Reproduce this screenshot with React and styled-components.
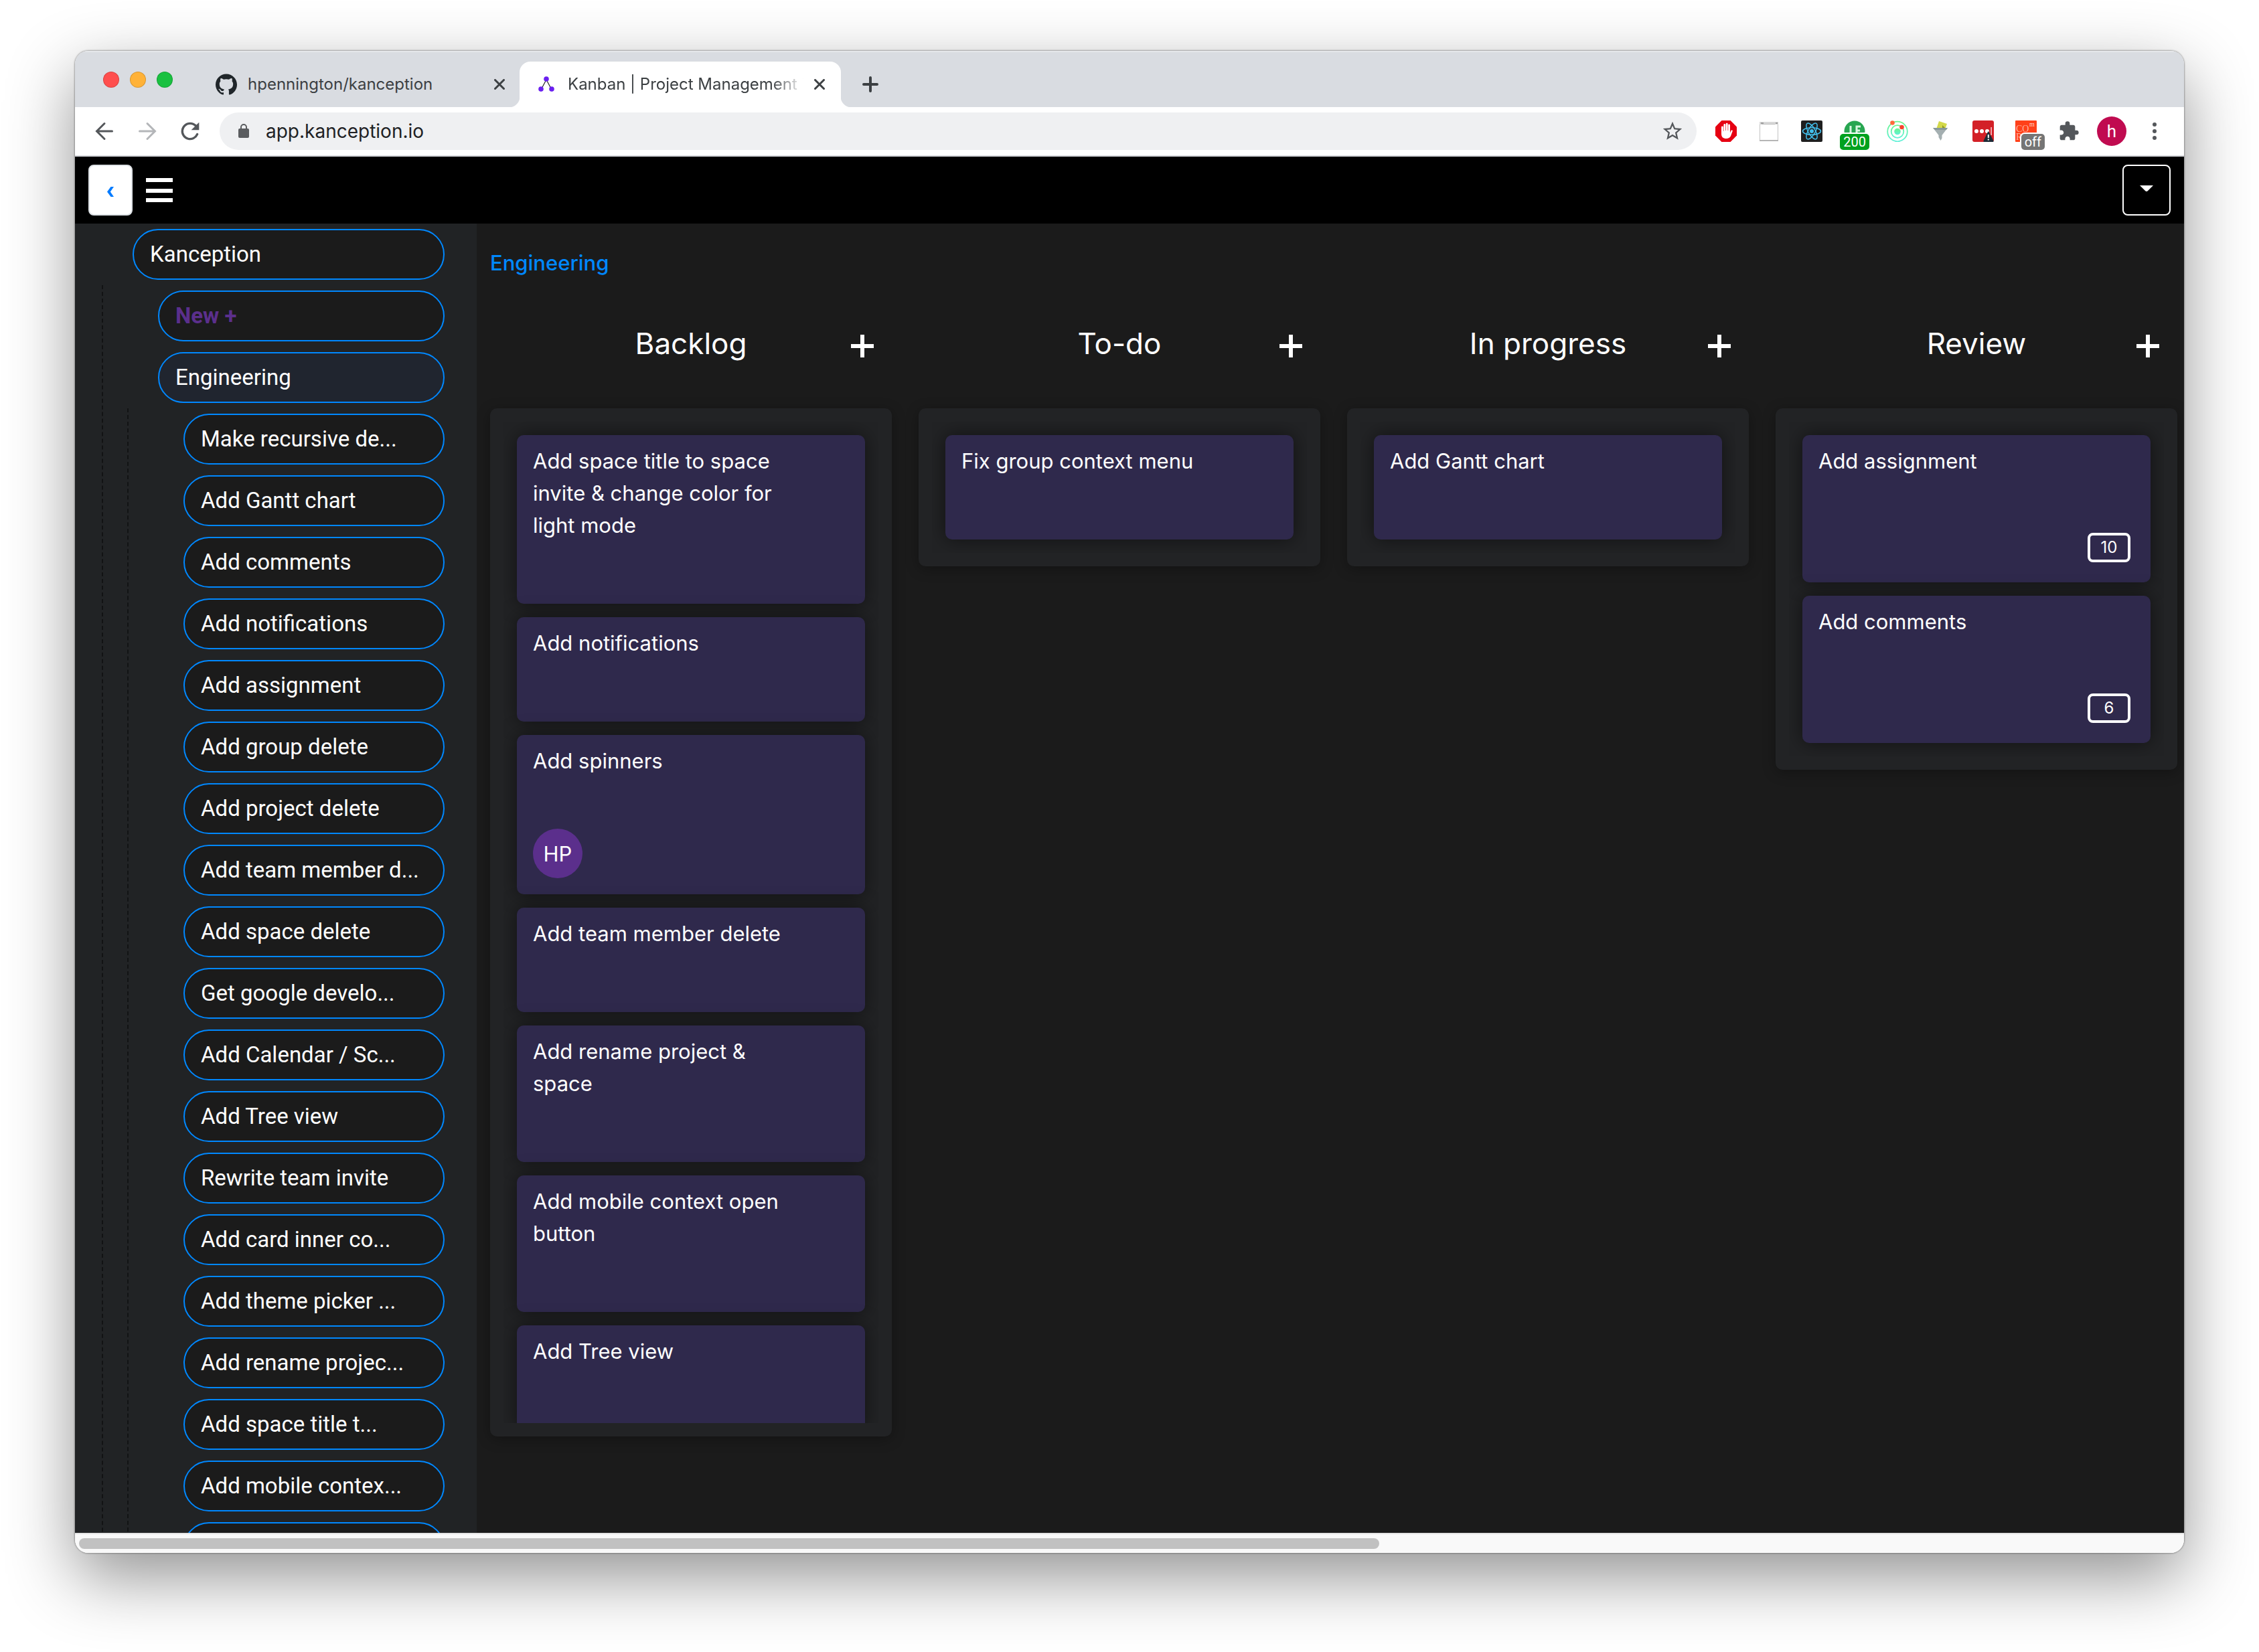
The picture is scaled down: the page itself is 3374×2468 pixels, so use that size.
import React from "react";
import styled, { createGlobalStyle } from "styled-components";
import { MdStarBorder, MdExtension } from "react-icons/md";
import { SiGithub } from "react-icons/si";

const GlobalStyle = createGlobalStyle`
  *, *::before, *::after { box-sizing: border-box; }
  body {
    margin: 0;
    background: #fff;
    font-family: Inter, "Liberation Sans", sans-serif;
  }
  button, input { font: inherit; color: inherit; }
  button { padding: 0; border: 0; background: none; cursor: pointer; }
  svg { display: block; flex: none; }
`;

const Desktop = styled.div`
  height: 100vh;
  padding: 76px 112px 148px;
  overflow: hidden;
`;

const Window = styled.div`
  display: flex;
  flex-direction: column;
  height: 100%;
  overflow: hidden;
  border-radius: 20px;
  background: #f9f9f9;
  box-shadow: 0 0 2px 1px rgba(0, 0, 0, 0.3), 0 36px 100px rgba(0, 0, 0, 0.43);
`;

/* Browser chrome */

const TabStrip = styled.div`
  display: flex;
  align-items: flex-end;
  height: 84px;
  flex: none;
  background: #d9dce1;
  box-shadow: inset 0 2px 0 #e6e8eb;
`;

const TrafficLights = styled.div`
  display: flex;
  align-self: center;
  gap: 16px;
  padding: 2px 30px 0 42px;
`;

const Light = styled.button`
  width: 24px;
  height: 24px;
  border: 1px solid rgba(0, 0, 0, 0.15);
  border-radius: 50%;
  background: ${(p) => p.$color};
`;

const Tab = styled.div`
  position: relative;
  display: flex;
  align-items: center;
  width: ${(p) => (p.$active ? 480 : 488)}px;
  height: 68px;
  padding: ${(p) => (p.$active ? "0 16px 0 28px" : "0 14px 0 34px")};
  border-radius: 16px 16px 0 0;
  background: ${(p) => (p.$active ? "#fff" : "transparent")};
  color: #3c4043;

  &::before,
  &::after {
    content: "";
    display: ${(p) => (p.$active ? "block" : "none")};
    position: absolute;
    bottom: 0;
    width: 16px;
    height: 16px;
  }
  &::before {
    right: 100%;
    background: radial-gradient(circle at 0 0, transparent 16px, #fff 17px);
  }
  &::after {
    left: 100%;
    background: radial-gradient(circle at 100% 0, transparent 16px, #fff 17px);
  }
`;

const TabTitle = styled.button`
  flex: 1;
  min-width: 0;
  margin: 0 8px 0 ${(p) => (p.$fade ? 20 : 16)}px;
  overflow: hidden;
  white-space: nowrap;
  text-align: left;
  font-size: 24px;
  line-height: 32px;
  ${(p) =>
    p.$fade &&
    "mask-image: linear-gradient(90deg, #000 calc(100% - 48px), transparent);"}
`;

const IconButton = styled.button`
  display: flex;
  align-items: center;
  justify-content: center;
  flex: none;
  width: ${(p) => p.$size || 32}px;
  height: ${(p) => p.$size || 32}px;
  color: ${(p) => p.$color || "#54575b"};
`;

const NewTab = styled(IconButton)`
  align-self: flex-end;
  width: 56px;
  height: 68px;
  margin-left: 16px;
`;

const Toolbar = styled.div`
  display: flex;
  align-items: center;
  height: 74px;
  flex: none;
  padding: 0 28px 0 24px;
  border-bottom: 2px solid #d5d7db;
  background: #fff;
`;

const NavButtons = styled.div`
  display: flex;
  gap: 24px;
  padding-right: 24px;
`;

const Omnibox = styled.label`
  display: flex;
  align-items: center;
  flex: 1;
  height: 56px;
  padding: 0 20px 0 28px;
  gap: 25px;
  border-radius: 28px;
  background: #eff0f2;
`;

const Address = styled.input`
  flex: 1;
  min-width: 0;
  padding: 0;
  border: 0;
  outline: 0;
  background: none;
  color: #202124;
  font-size: 28px;
  line-height: 40px;
`;

const Extensions = styled.div`
  display: flex;
  align-items: center;
  gap: 32px;
  padding-left: 28px;
`;

const Extension = styled(IconButton)`
  position: relative;
`;

const Badge = styled.span`
  position: absolute;
  top: 20px;
  right: -${(p) => p.$overhang}px;
  padding: 0 5px;
  border-radius: 5px;
  background: ${(p) => p.$color};
  box-shadow: 0 0 0 2px #fff;
  color: #fff;
  font-family: Roboto, sans-serif;
  font-size: 20px;
  line-height: 24px;
`;

const Profile = styled(IconButton)`
  margin: 0 -6px;
  border-radius: 50%;
  background: #c00b50;
  color: #fff;
  font-size: 26px;
  font-family: Roboto, sans-serif;
`;

/* Application */

const AppHeader = styled.header`
  display: flex;
  align-items: center;
  height: 100px;
  flex: none;
  gap: 20px;
  padding: 0 20px;
  background: #000;
`;

const BackButton = styled.button`
  display: flex;
  align-items: center;
  justify-content: center;
  width: 66px;
  height: 76px;
  padding-top: 4px;
  border: 2px solid #dee2e6;
  border-radius: 8px;
  background: #fff;
  color: #007bff;
`;

const AccountButton = styled(BackButton)`
  width: 72px;
  margin-left: auto;
  padding: 0 0 4px;
  border-color: #fff;
  background: #000;
  color: #fff;
`;

const Body = styled.div`
  display: flex;
  flex: 1;
  min-height: 0;
`;

const Sidebar = styled.nav`
  width: 600px;
  flex: none;
  padding: 0 48px 0 4px;
  overflow: hidden;
  background: #212325;
`;

const Branch = styled.div`
  margin-left: 36px;
  border-left: 2px dashed #121314;
`;

const Leaf = styled.div`
  padding: 8px 0 8px 82px;
`;

const Pill = styled.button`
  display: block;
  width: 100%;
  height: 76px;
  padding: 0 24px 2px;
  overflow: hidden;
  border: 2px solid #0088ff;
  border-radius: 38px;
  background: ${(p) => (p.$selected ? "#20252f" : "#1b1b1b")};
  color: ${(p) => (p.$accent ? "#5b2f8c" : "#fff")};
  font-family: Roboto, sans-serif;
  font-size: 33px;
  font-weight: ${(p) => (p.$accent ? 700 : 400)};
  text-align: left;
  white-space: nowrap;
`;

const Board = styled.main`
  display: flex;
  flex-direction: column;
  flex: 1;
  min-width: 0;
  padding: 35px 0 144px 20px;
  overflow: hidden;
  background: #1b1b1b;
`;

const Breadcrumb = styled.a`
  align-self: flex-start;
  color: #0088ff;
  font-size: 31px;
  font-weight: 500;
  line-height: 48px;
  text-decoration: none;
`;

const Columns = styled.div`
  display: flex;
  align-items: flex-start;
  flex: 1;
  min-height: 0;
  gap: 40px;
`;

const Column = styled.section`
  display: flex;
  flex-direction: column;
  width: 600px;
  max-height: 100%;
  flex: none;
`;

const ColumnHead = styled.header`
  display: grid;
  grid-template-columns: 1fr auto 1fr;
  align-items: center;
  padding: 50px 24px 51px;
`;

const ColumnTitle = styled.h2`
  grid-column: 2;
  margin: 0;
  color: #fff;
  font-size: 44px;
  font-weight: 400;
  line-height: 92px;
`;

const AddCard = styled(IconButton)`
  justify-self: end;
  height: 48px;
  padding-top: 8px;
`;

const Lane = styled.div`
  display: flex;
  flex-direction: column;
  min-height: 0;
  padding: 20px;
  border-radius: 10px;
  background: #222325;
  box-shadow: 0 4px 20px rgba(0, 0, 0, 0.3);
`;

const CardList = styled.div`
  display: flex;
  flex-direction: column;
  min-height: 0;
  gap: 20px;
  padding: 20px;
  overflow: hidden;
`;

const Card = styled.article`
  display: flex;
  flex-direction: column;
  flex: none;
  min-height: 156px;
  padding: 15px 30px ${(p) => (p.$footer ? 24 : 93)}px 24px;
  border-radius: 10px;
  background: #2f294c;
  box-shadow: 0 0 28px rgba(0, 0, 0, 0.5);
  color: #fff;
`;

const CardTitle = styled.p`
  width: 380px;
  margin: 0;
  font-size: 31px;
  line-height: 48px;
`;

const Assignee = styled.span`
  display: flex;
  align-items: center;
  justify-content: center;
  width: 74px;
  height: 74px;
  margin-top: 77px;
  border-radius: 50%;
  background: #5b2f8c;
  font-size: 31px;
`;

const Comments = styled.span`
  align-self: flex-end;
  width: 64px;
  margin: 83px 0 6px;
  border: 4px solid #fff;
  border-radius: 8px;
  font-size: 24px;
  line-height: 36px;
  text-align: center;
`;

const ScrollTrack = styled.div`
  height: 30px;
  flex: none;
  padding: 6px;
  border-top: 2px solid #e4e4e4;
  background: #f9f9f9;
`;

const ScrollThumb = styled.div`
  width: 61.9%;
  height: 16px;
  border-radius: 8px;
  background: #c1c1c1;
`;

/* Icons */

const Cross = () => (
  <svg width="16" height="16" viewBox="0 0 16 16" fill="none" stroke="#3c4043" strokeWidth="3" strokeLinecap="round">
    <path d="M1.5 1.5l13 13M14.5 1.5l-13 13" />
  </svg>
);

const Plus = ({ size, stroke, color, cap }) => (
  <svg width={size} height={size} viewBox={`0 0 ${size} ${size}`} fill="none" stroke={color} strokeWidth={stroke} strokeLinecap={cap}>
    <path
      d={
        cap === "round"
          ? `M${stroke / 2} ${size / 2}H${size - stroke / 2}M${size / 2} ${stroke / 2}V${size - stroke / 2}`
          : `M0 ${size / 2}H${size}M${size / 2} 0V${size}`
      }
    />
  </svg>
);

const TreeLogo = () => (
  <svg width="24" height="28" viewBox="0 0 24 28">
    <path d="M12 7L4 22M12 7l8 15" stroke="#222" strokeWidth="1.2" />
    <g fill="#6a1ff0">
      <circle cx="12" cy="6" r="3.8" />
      <circle cx="4" cy="21" r="3.8" />
      <circle cx="20" cy="21" r="3.8" />
    </g>
  </svg>
);

const Arrow = ({ flip }) => (
  <svg width="28" height="28" viewBox="0 0 28 28" fill="none" stroke={flip ? "#b4b6b9" : "#54575b"} strokeWidth="3" strokeLinecap="round">
    <path d={flip ? "M2.5 14H25M14 2.5L25.5 14 14 25.5" : "M25.5 14H3M14 2.5L2.5 14 14 25.5"} />
  </svg>
);

const Reload = () => (
  <svg width="40" height="40" viewBox="0 0 24 24" fill="#54575b">
    <path d="M17.65 6.35A7.95 7.95 0 0 0 12 4a8 8 0 1 0 7.3 11.2 1 1 0 0 0-1.8-.9A6 6 0 1 1 12 6c1.66 0 3.14.69 4.22 1.78L13 11h7V4l-2.35 2.35z" />
  </svg>
);

const Lock = () => (
  <svg width="16" height="22" viewBox="0 0 16 22">
    <rect y="7" width="16" height="14" rx="2" fill="#5a5c5f" />
    <path d="M4 8V5a4 4 0 0 1 8 0v3" fill="none" stroke="#5a5c5f" strokeWidth="2" />
  </svg>
);

const Kebab = () => (
  <svg width="8" height="28" viewBox="0 0 8 28" fill="#54575b">
    <circle cx="4" cy="4" r="3" />
    <circle cx="4" cy="14" r="3" />
    <circle cx="4" cy="24" r="3" />
  </svg>
);

const StopHand = () => (
  <svg width="32" height="32" viewBox="0 0 32 32">
    <path d="M9.4 0h13.2L32 9.4v13.2L22.6 32H9.4L0 22.6V9.4z" fill="#e60012" />
    <path
      d="M9 10a1.4 1.4 0 0 1 2.8 0v6h.6V6.5a1.4 1.4 0 0 1 2.8 0V15h.6V5.2a1.4 1.4 0 0 1 2.8 0V15h.6V6.8a1.4 1.4 0 0 1 2.8 0V18.5l1-2.5c.5-1.2 1.4-1.7 2.5-1.2.5.3.3.9.1 1.5l-2.6 7C21.5 26 19.5 27 16.5 27 11.5 27 9 24.5 9 20z"
      fill="#fff"
    />
  </svg>
);

const BlankPage = () => (
  <svg width="32" height="32" viewBox="0 0 32 32">
    <rect x="2.5" y="3" width="27" height="27" fill="#fff" stroke="#c4c4c4" />
    <rect x="2" y="2" width="28" height="4" fill="#d8d8d8" />
    <path d="M4 4h4M26 4h3" stroke="#8d8d8d" strokeWidth="1.5" />
    <path d="M5 5.5h20" stroke="#bbb" />
    <path d="M2 30h28" stroke="#b5b5b5" strokeWidth="2" />
  </svg>
);

const Atom = () => (
  <svg width="32" height="32" viewBox="0 0 32 32">
    <rect width="32" height="32" rx="2" fill="#1f1f1f" />
    <g fill="none" stroke="#42bfec" strokeWidth="1.5">
      <ellipse cx="16" cy="16" rx="13.5" ry="5.2" />
      <ellipse cx="16" cy="16" rx="13.5" ry="5.2" transform="rotate(60 16 16)" />
      <ellipse cx="16" cy="16" rx="13.5" ry="5.2" transform="rotate(120 16 16)" />
    </g>
    <circle cx="16" cy="16" r="3" fill="#42bfec" />
  </svg>
);

const GreenDisc = () => (
  <svg width="32" height="32" viewBox="0 0 32 32">
    <circle cx="16" cy="16" r="15.5" fill="#28a651" />
    <path d="M10 8v12h5M25 9h-6v11M19 15h5" fill="none" stroke="#d8f5e0" strokeWidth="3" />
  </svg>
);

const Orbit = () => (
  <svg width="32" height="32" viewBox="0 0 32 32">
    <defs>
      <linearGradient id="orbit" x1="0" y1="0" x2="0" y2="1">
        <stop offset="0" stopColor="#6df58c" />
        <stop offset="1" stopColor="#5ff0d8" />
      </linearGradient>
    </defs>
    <g fill="none" stroke="url(#orbit)" strokeWidth="1.8">
      <circle cx="16" cy="16.5" r="14.8" />
      <circle cx="16" cy="16.5" r="9.3" />
    </g>
    <circle cx="16" cy="16.5" r="4.8" fill="url(#orbit)" />
    <circle cx="8.5" cy="3.5" r="3.3" fill="#ff6a3a" />
    <circle cx="22.5" cy="10" r="3.3" fill="#f8432f" />
  </svg>
);

const Funnel = () => (
  <svg width="32" height="32" viewBox="0 0 32 32">
    <path d="M14 1l12 4-4 11H9z" fill="#d3d94a" />
    <path d="M19 7l4 4-4 2z" fill="#8e9626" />
    <path d="M5 11h22l-8.5 11v4.5L16.5 30l-3-5v-3z" fill="#a4afb1" />
    <path d="M5 11h22l-2 3H8z" fill="#87999a" />
  </svg>
);

const PasswordDots = () => (
  <svg width="32" height="32" viewBox="0 0 32 32">
    <rect width="32" height="32" rx="3" fill="#d32027" />
    <g fill="#fff">
      <circle cx="6" cy="16" r="3" />
      <circle cx="14" cy="16" r="3" />
      <circle cx="22" cy="16" r="3" />
      <path d="M27.5 10h1.2v12h-1.2z" />
    </g>
    <path d="M24.5 17l7 13.5q.3 1.5-1 1.5h-13q-1.500 0-1-1.500l6.500-13.500q.7-1.500 1.500 0z" fill="#1d2b36" />
    <path d="M22.8 21h2v5h-2zM22.8 27.5h2v2h-2z" fill="#fff" />
  </svg>
);

const RedTile = () => (
  <svg width="32" height="32" viewBox="0 0 32 32" fontFamily="Liberation Serif, serif">
    <rect width="32" height="32" rx="1" fill="#ff4019" />
    <text x="1" y="17" fontSize="14" fill="#ffb09c">CO</text>
    <text x="1" y="29" fontSize="14" fill="#ffb09c">R</text>
    <text x="21" y="9" fontSize="10" fill="#ffd6ca">m</text>
  </svg>
);

const Chevron = () => (
  <svg width="10" height="15" viewBox="0 0 10 15" fill="#007bff">
    <path d="M5.5 0H10L4.8 7.5 10 15H5.5L0 7.5z" />
  </svg>
);

const Bars = () => (
  <svg width="40" height="36" viewBox="0 0 40 36" fill="#fff">
    <path d="M0 0h40v6H0zM0 16h40v6H0zM0 30h40v6H0z" />
  </svg>
);

const Caret = () => (
  <svg width="20" height="10" viewBox="0 0 20 10" fill="#fff">
    <path d="M0 0h20L12 8q-2 2-4 0z" />
  </svg>
);

/* Data */

const lights = [
  ["Close window", "#ff4f4e"],
  ["Minimise window", "#ffb238"],
  ["Zoom window", "#1ac141"],
];

const extensions = [
  { name: "Ad blocker", icon: StopHand },
  { name: "Page viewer", icon: BlankPage },
  { name: "React tools", icon: Atom },
  { name: "Status checker", icon: GreenDisc, badge: "200", color: "#00a11e", overhang: 6 },
  { name: "Orbit", icon: Orbit },
  { name: "Filter", icon: Funnel },
  { name: "Passwords", icon: PasswordDots },
  { name: "CORS", icon: RedTile, badge: "off", color: "#757575", overhang: 12 },
];

const tasks = [
  "Make recursive de...",
  "Add Gantt chart",
  "Add comments",
  "Add notifications",
  "Add assignment",
  "Add group delete",
  "Add project delete",
  "Add team member d...",
  "Add space delete",
  "Get google develo...",
  "Add Calendar / Sc...",
  "Add Tree view",
  "Rewrite team invite",
  "Add card inner co...",
  "Add theme picker ...",
  "Add rename projec...",
  "Add space title t...",
  "Add mobile contex...",
  "",
];

const columns = [
  {
    title: "Backlog",
    cards: [
      { title: "Add space title to space invite & change color for light mode" },
      { title: "Add notifications" },
      { title: "Add spinners", assignee: "HP" },
      { title: "Add team member delete" },
      { title: "Add rename project & space" },
      { title: "Add mobile context open button" },
      { title: "Add Tree view" },
    ],
  },
  { title: "To-do", cards: [{ title: "Fix group context menu" }] },
  { title: "In progress", cards: [{ title: "Add Gantt chart" }] },
  {
    title: "Review",
    cards: [
      { title: "Add assignment", comments: 10 },
      { title: "Add comments", comments: 6 },
    ],
  },
];

function BrowserChrome() {
  return (
    <>
      <TabStrip>
        <TrafficLights>
          {lights.map(([label, color]) => (
            <Light key={label} aria-label={label} $color={color} />
          ))}
        </TrafficLights>
        <Tab>
          <SiGithub size={32} color="#20262a" />
          <TabTitle>hpennington/kanception</TabTitle>
          <IconButton aria-label="Close tab"><Cross /></IconButton>
        </Tab>
        <Tab $active>
          <TreeLogo />
          <TabTitle $fade>Kanban | Project Management T</TabTitle>
          <IconButton aria-label="Close tab"><Cross /></IconButton>
        </Tab>
        <NewTab aria-label="New tab">
          <Plus size={24} stroke={4} color="#3c4043" cap="round" />
        </NewTab>
      </TabStrip>
      <Toolbar>
        <NavButtons>
          <IconButton $size={40} aria-label="Back"><Arrow /></IconButton>
          <IconButton $size={40} aria-label="Forward"><Arrow flip /></IconButton>
          <IconButton $size={40} aria-label="Reload"><Reload /></IconButton>
        </NavButtons>
        <Omnibox>
          <Lock />
          <Address aria-label="Address" defaultValue="app.kanception.io" />
          <IconButton aria-label="Bookmark this page"><MdStarBorder size={34} /></IconButton>
        </Omnibox>
        <Extensions>
          {extensions.map(({ name, icon: Icon, badge, color, overhang }) => (
            <Extension key={name} aria-label={name}>
              <Icon />
              {badge && <Badge $color={color} $overhang={overhang}>{badge}</Badge>}
            </Extension>
          ))}
          <IconButton aria-label="Extensions"><MdExtension size={32} /></IconButton>
          <Profile $size={44} $color="#fff">h</Profile>
          <IconButton aria-label="Browser menu"><Kebab /></IconButton>
        </Extensions>
      </Toolbar>
    </>
  );
}

function TreeItem({ children, ...rest }) {
  return (
    <Leaf>
      <Pill {...rest}>{children}</Pill>
    </Leaf>
  );
}

function BoardCard({ title, assignee, comments }) {
  return (
    <Card $footer={Boolean(assignee || comments)}>
      <CardTitle>{title}</CardTitle>
      {assignee && <Assignee>{assignee}</Assignee>}
      {comments && <Comments>{comments}</Comments>}
    </Card>
  );
}

export default function App() {
  return (
    <>
      <GlobalStyle />
      <Desktop>
        <Window>
          <BrowserChrome />
          <AppHeader>
            <BackButton aria-label="Back"><Chevron /></BackButton>
            <IconButton $size={40} aria-label="Menu"><Bars /></IconButton>
            <AccountButton aria-label="Account"><Caret /></AccountButton>
          </AppHeader>
          <Body>
            <Sidebar>
              <TreeItem>Kanception</TreeItem>
              <Branch>
                <TreeItem $accent>New +</TreeItem>
                <TreeItem $selected>Engineering</TreeItem>
                <Branch>
                  {tasks.map((task, i) => (
                    <TreeItem key={i}>{task}</TreeItem>
                  ))}
                </Branch>
              </Branch>
            </Sidebar>
            <Board>
              <Breadcrumb href="#engineering">Engineering</Breadcrumb>
              <Columns>
                {columns.map((column) => (
                  <Column key={column.title}>
                    <ColumnHead>
                      <ColumnTitle>{column.title}</ColumnTitle>
                      <AddCard $size={40} aria-label={`Add card to ${column.title}`}>
                        <Plus size={34} stroke={6} color="#fff" cap="butt" />
                      </AddCard>
                    </ColumnHead>
                    <Lane>
                      <CardList>
                        {column.cards.map((card) => (
                          <BoardCard key={card.title} {...card} />
                        ))}
                      </CardList>
                    </Lane>
                  </Column>
                ))}
              </Columns>
            </Board>
          </Body>
          <ScrollTrack>
            <ScrollThumb />
          </ScrollTrack>
        </Window>
      </Desktop>
    </>
  );
}
